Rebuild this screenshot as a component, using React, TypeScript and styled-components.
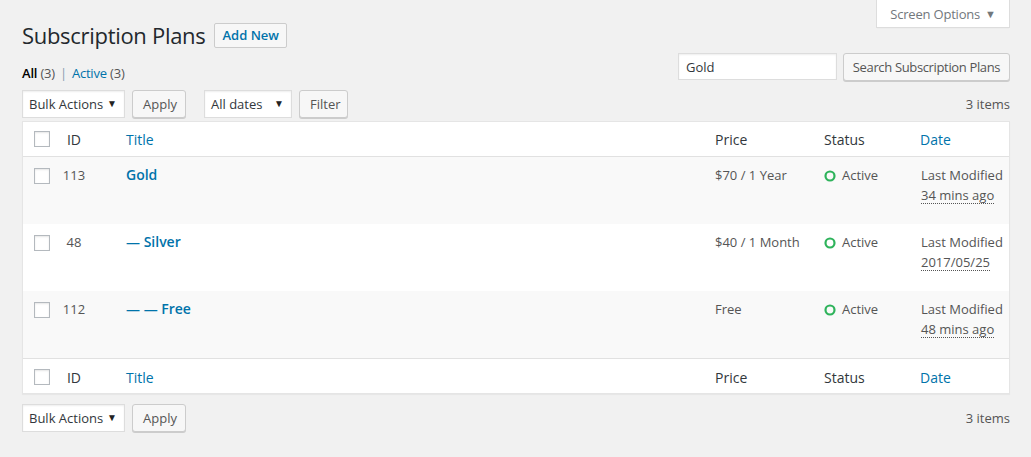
import React from 'react';
import styled, { createGlobalStyle } from 'styled-components';

const GlobalStyle = createGlobalStyle`
  html, body { margin: 0; padding: 0; background: #f1f1f1; }
  body {
    font-family: "Open Sans", "Noto Sans", sans-serif;
    font-size: 13px;
    color: #444;
  }
  * { box-sizing: border-box; }
`;

const Page = styled.div`
  width: 1031px;
  min-height: 457px;
  padding: 0 21px 0 22px;
`;

const HeaderRow = styled.div`
  display: flex;
  justify-content: space-between;
  align-items: flex-start;
`;

const TitleGroup = styled.div`
  display: flex;
  align-items: center;
  gap: 9px;
  padding-top: 21px;
`;

const H1 = styled.h1`
  margin: 0;
  font-size: 22px;
  font-weight: 400;
  line-height: 29px;
  letter-spacing: -0.3px;
  color: #23282d;
`;

const AddNew = styled.button`
  height: 25px;
  padding: 0 7px;
  border: 1px solid #ccc;
  border-radius: 2px;
  background: #f7f7f7;
  color: #0073aa;
  font-family: inherit;
  font-size: 13px;
  font-weight: 600;
  line-height: 23px;
`;

const ScreenOptions = styled.div`
  width: 134px;
  height: 28px;
  background: #fff;
  border: 1px solid #ddd;
  border-top: none;
  box-shadow: 0 1px 1px -1px rgba(0, 0, 0, 0.1);
  color: #72777c;
  display: flex;
  align-items: center;
  justify-content: center;
  gap: 5px;
  font-size: 13px;
  letter-spacing: -0.2px;
`;

const Caret = styled.span`
  font-size: 11px;
  color: #72777c;
  margin-top: -1px;
`;

const SubRow = styled.div`
  display: flex;
  justify-content: space-between;
  align-items: flex-start;
  margin-top: 3px;
`;

const Subsubsub = styled.div`
  margin-top: 10px;
  line-height: 20px;
  color: #666;
  display: flex;
  gap: 3px;
  letter-spacing: -0.2px;
`;

const ViewLink = styled.span<{ $current?: boolean }>`
  color: ${(p) => (p.$current ? '#000' : '#0073aa')};
  font-weight: ${(p) => (p.$current ? 600 : 400)};
`;

const Count = styled.span`
  color: #555;
  font-weight: 400;
`;

const Sep = styled.span`
  color: #8a9bb0;
  margin: 0 2px;
`;

const SearchBox = styled.div`
  display: flex;
  gap: 6px;
`;

const SearchInput = styled.input`
  width: 159px;
  height: 27px;
  border: 1px solid #ddd;
  box-shadow: inset 0 1px 2px rgba(0, 0, 0, 0.07);
  background: #fff;
  padding: 0 7px;
  font-family: inherit;
  font-size: 13px;
  color: #32373c;
  outline: none;
`;

const Button = styled.button<{ $w?: number; $tight?: boolean }>`
  height: 28px;
  ${(p) => (p.$w ? `width: ${p.$w}px;` : '')}
  padding: ${(p) => (p.$tight ? '0 4px 1px' : '0 10px 1px')};
  letter-spacing: ${(p) => (p.$tight ? '-0.35px' : '0')};
  border: 1px solid #ccc;
  border-radius: 3px;
  background: #f7f7f7;
  box-shadow: 0 1px 0 #ccc;
  color: #555;
  font-family: inherit;
  font-size: 13px;
  line-height: 26px;
  white-space: nowrap;
`;

const Tablenav = styled.div<{ $top?: number }>`
  display: flex;
  align-items: center;
  height: 28px;
  margin-top: ${(p) => p.$top ?? 0}px;
`;

const Group = styled.div`
  display: flex;
  gap: 7px;
  margin-right: 18px;
`;

const Select = styled.div<{ $w: number }>`
  width: ${(p) => p.$w}px;
  height: 28px;
  background: #fff;
  border: 1px solid #ddd;
  box-shadow: inset 0 1px 2px rgba(0, 0, 0, 0.07);
  color: #32373c;
  display: flex;
  align-items: center;
  justify-content: space-between;
  padding: 0 7px 0 6px;
  font-size: 13px;
`;

const SelectArrow = styled.span`
  font-size: 10px;
  color: #222;
  margin-top: -2px;
`;

const ItemCount = styled.div`
  margin-left: auto;
  color: #555;
`;

const Table = styled.div`
  margin-top: 3px;
  background: #fff;
  border: 1px solid #e5e5e5;
  box-shadow: 0 1px 1px rgba(0, 0, 0, 0.04);
`;

const cols = '31px 40px 1fr 109px 96px 99px';

const HeadRow = styled.div<{ $foot?: boolean }>`
  display: grid;
  grid-template-columns: ${cols};
  align-items: center;
  height: 35px;
  ${(p) =>
    p.$foot
      ? 'border-top: 1px solid #e1e1e1; padding-top: 2px;'
      : 'border-bottom: 1px solid #e1e1e1;'}
  font-size: 14px;
  color: #32373c;
`;

const Row = styled.div<{ $alt?: boolean }>`
  display: grid;
  grid-template-columns: ${cols};
  align-items: start;
  height: 67px;
  background: ${(p) => (p.$alt ? '#f9f9f9' : '#fff')};
  color: #555;
  line-height: 19.5px;
`;

const Cell = styled.div<{ $pl?: number; $center?: boolean; $link?: boolean; $pt?: number }>`
  padding-left: ${(p) => p.$pl ?? 10}px;
  padding-top: ${(p) => p.$pt ?? 0}px;
  text-align: ${(p) => (p.$center ? 'center' : 'left')};
  color: ${(p) => (p.$link ? '#0073aa' : 'inherit')};
  white-space: nowrap;
`;

const Check = styled.span<{ $mt?: number }>`
  display: block;
  width: 16px;
  height: 16px;
  margin-left: 11px;
  margin-top: ${(p) => p.$mt ?? 0}px;
  border: 1px solid #b4b9be;
  background: #fff;
  box-shadow: inset 0 1px 2px rgba(0, 0, 0, 0.1);
`;

const RowTitle = styled.span`
  font-size: 14px;
  font-weight: 600;
  color: #0073aa;
  padding-left: 2px;
`;

const Status = styled.span`
  display: inline-flex;
  align-items: center;
  gap: 6px;
`;

const Abbr = styled.span`
  border-bottom: 1px dotted #555;
  line-height: 16px;
  display: inline-block;
  margin-left: 1px;
`;

const DateLabel = styled.span`
  margin-left: 1px;
`;

const plans = [
  { id: '113', title: 'Gold', price: '$70 / 1 Year', date: '34 mins ago' },
  { id: '48', title: '— Silver', price: '$40 / 1 Month', date: '2017/05/25' },
  { id: '112', title: '— — Free', price: 'Free', date: '48 mins ago' },
];

const StatusIcon = () => (
  <svg width="12" height="12" viewBox="0 0 12 12">
    <circle cx="6" cy="6" r="4.5" fill="none" stroke="#2eb35b" strokeWidth="2.2" />
  </svg>
);

const HeaderCells = () => (
  <>
    <Check />
    <Cell $center $pl={0}>ID</Cell>
    <Cell $pl={32} $link>Title</Cell>
    <Cell>Price</Cell>
    <Cell>Status</Cell>
    <Cell $link>Date</Cell>
  </>
);

export default function App() {
  return (
    <Page>
      <GlobalStyle />
      <HeaderRow>
        <TitleGroup>
          <H1>Subscription Plans</H1>
          <AddNew>Add New</AddNew>
        </TitleGroup>
        <ScreenOptions>
          Screen Options <Caret>▼</Caret>
        </ScreenOptions>
      </HeaderRow>

      <SubRow>
        <Subsubsub>
          <ViewLink $current>
            All <Count>(3)</Count>
          </ViewLink>
          <Sep>|</Sep>
          <ViewLink>
            Active <Count>(3)</Count>
          </ViewLink>
        </Subsubsub>
        <SearchBox>
          <SearchInput defaultValue="Gold" />
          <Button $w={167} $tight>Search Subscription Plans</Button>
        </SearchBox>
      </SubRow>

      <Tablenav $top={7}>
        <Group>
          <Select $w={103}>
            Bulk Actions <SelectArrow>▼</SelectArrow>
          </Select>
          <Button $w={54}>Apply</Button>
        </Group>
        <Group>
          <Select $w={88}>
            All dates <SelectArrow>▼</SelectArrow>
          </Select>
          <Button $w={49}>Filter</Button>
        </Group>
        <ItemCount>3 items</ItemCount>
      </Tablenav>

      <Table>
        <HeadRow>
          <HeaderCells />
        </HeadRow>
        {plans.map((p, i) => (
          <Row key={p.id} $alt={i % 2 === 0}>
            <Check $mt={11} />
            <Cell $center $pl={0} $pt={9}>{p.id}</Cell>
            <Cell $pl={30} $pt={8}>
              <RowTitle>{p.title}</RowTitle>
            </Cell>
            <Cell $pt={9}>{p.price}</Cell>
            <Cell $pt={9}>
              <Status>
                <StatusIcon />
                Active
              </Status>
            </Cell>
            <Cell $pt={9}>
              <DateLabel>Last Modified</DateLabel>
              <br />
              <Abbr>{p.date}</Abbr>
            </Cell>
          </Row>
        ))}
        <HeadRow $foot>
          <HeaderCells />
        </HeadRow>
      </Table>

      <Tablenav $top={10}>
        <Group>
          <Select $w={103}>
            Bulk Actions <SelectArrow>▼</SelectArrow>
          </Select>
          <Button $w={54}>Apply</Button>
        </Group>
        <ItemCount>3 items</ItemCount>
      </Tablenav>
    </Page>
  );
}
